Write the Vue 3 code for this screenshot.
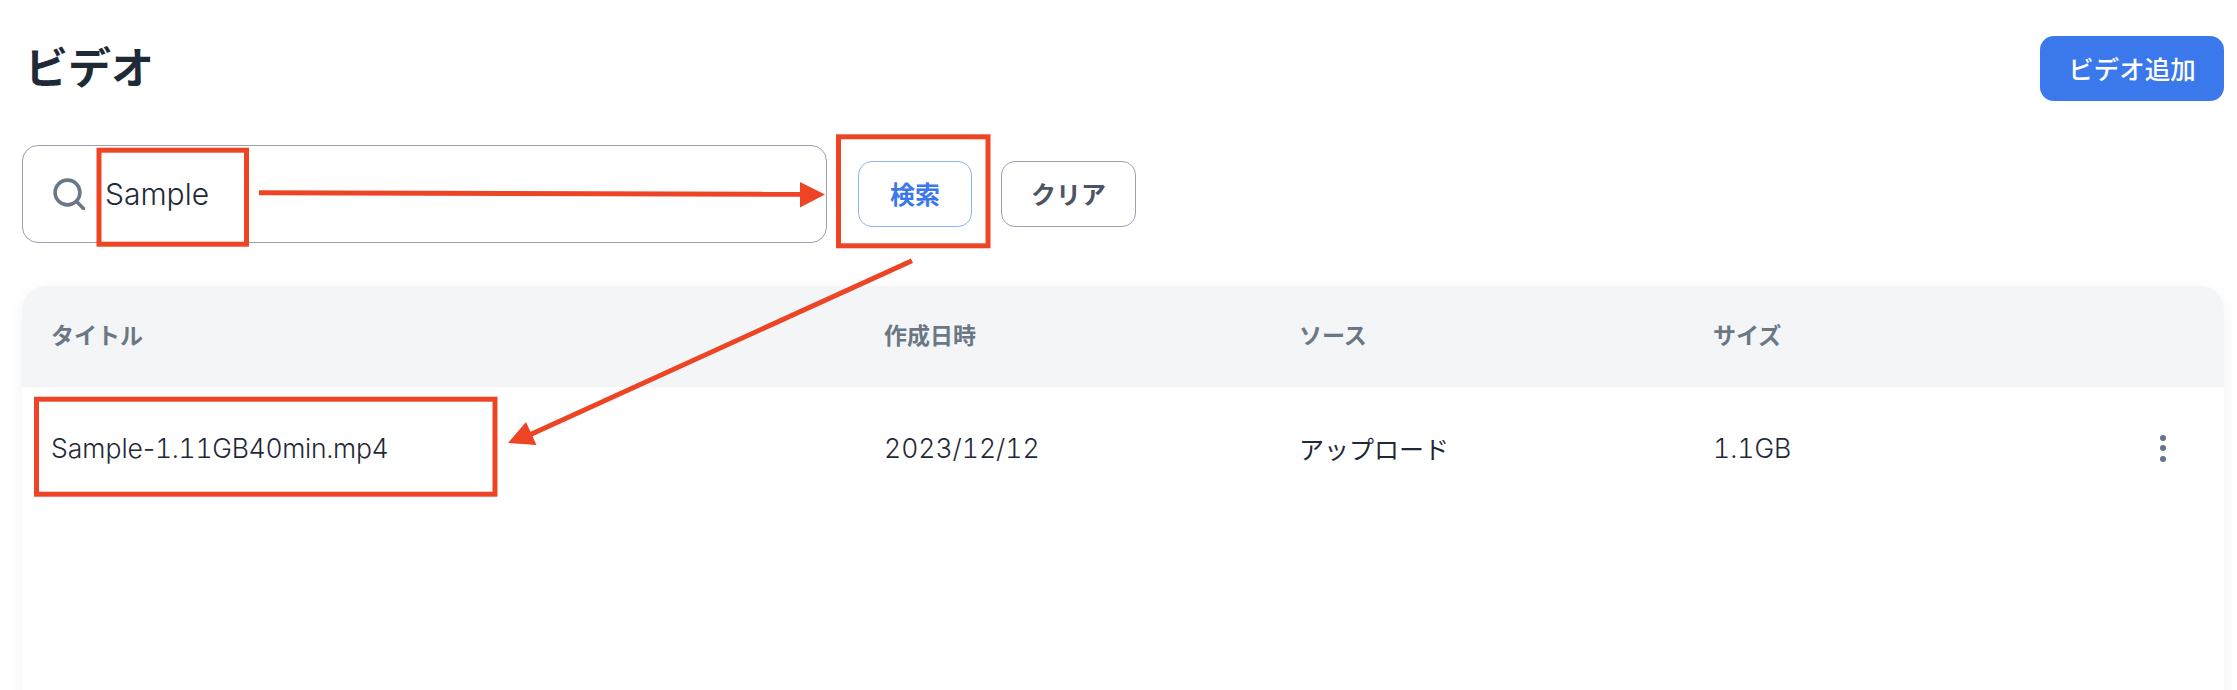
<template>
  <div class="page">
    <div class="head">
      <h1>ビデオ</h1>
      <button class="btn-add">ビデオ追加</button>
    </div>

    <div class="search-row">
      <label class="search-box">
        <svg class="search-icon" viewBox="0 0 32 32" fill="none" stroke="#687888" stroke-width="3.6" stroke-linecap="round">
          <circle cx="14.5" cy="14.5" r="12.4" />
          <path d="M24 24 L30.5 30.5" />
        </svg>
        <input type="text" value="Sample" />
      </label>
      <button class="btn-search">検索</button>
      <button class="btn-clear">クリア</button>
    </div>

    <div class="card">
      <div class="row row-head">
        <div v-for="c in columns" :key="c">{{ c }}</div>
        <div></div>
      </div>
      <div v-for="v in videos" :key="v.name + v.file" class="row row-body">
        <div class="title"><span class="name">{{ v.name }}</span>{{ v.file }}</div>
        <div>{{ v.created }}</div>
        <div class="jp">{{ v.source }}</div>
        <div>{{ v.size }}</div>
        <div class="more"><i></i><i></i><i></i></div>
      </div>
    </div>

    <!-- 赤い注釈 -->
    <svg class="notes" width="2237" height="690" viewBox="0 0 2237 690" fill="none">
      <g stroke="#ee4426" stroke-width="5">
        <rect x="99" y="150.2" width="147.5" height="94" />
        <rect x="838.5" y="136.8" width="149.5" height="109" />
        <rect x="36.5" y="399.2" width="458.5" height="95" />
        <path d="M259 192.7 L802 194.3" />
        <path d="M912 260.7 L525 437" />
      </g>
      <path d="M825 194.5 L800 182 L800 207.5 Z" fill="#ee4426" />
      <path d="M508 443 L526 422 L536.5 445 Z" fill="#ee4426" />
    </svg>
  </div>
</template>

<script setup>
const columns = ['タイトル', '作成日時', 'ソース', 'サイズ']
const videos = [
  { name: 'Sample-', file: '1.11GB40min.mp4', created: '2023/12/12', source: 'アップロード', size: '1.1GB' }
]
</script>

<style>
html, body { margin: 0; background: #fff; overflow: hidden; }
</style>

<style scoped>
.page {
  position: relative;
  width: 2237px;
  height: 690px;
  overflow: hidden;
  box-sizing: border-box;
  padding: 36px 13px 0 22px;
  font-family: Inter, "Noto Sans CJK JP", sans-serif;
  font-variant-numeric: tabular-nums;
  color: #1f2937;
}
.head { display: flex; justify-content: space-between; align-items: center; height: 65px; }
h1 { margin: 0 0 0 3px; font-size: 43px; font-weight: 700; color: #1f2a37; line-height: 1; }
button { font-family: inherit; font-size: 25px; font-weight: 600; background: #fff; cursor: pointer; box-sizing: border-box; padding: 0 0 2px; }
.btn-add { width: 184px; height: 65px; border: none; border-radius: 14px; background: #3b78ec; color: #fff; font-size: 25.5px; font-weight: 500; }
.search-row { display: flex; align-items: center; margin-top: 44px; }
.search-box {
  display: flex;
  align-items: center;
  box-sizing: border-box;
  width: 805px;
  height: 98px;
  padding-left: 30px;
  border: 1px solid #9aa0ad;
  border-radius: 16px;
}
.search-icon { width: 32px; height: 32px; flex: none; }
input {
  flex: 1;
  min-width: 0;
  margin-left: 20px;
  border: none;
  outline: none;
  padding: 0;
  font-family: inherit;
  font-size: 30px;
  font-weight: 300;
  color: #1f2937;
  background: transparent;
}
.btn-search { width: 114px; height: 66px; margin-left: 31px; border: 1px solid #8fb4f4; border-radius: 14px; color: #3b78ec; }
.btn-clear { width: 135px; height: 66px; margin-left: 29px; border: 1px solid #9aa0ad; border-radius: 14px; color: #4b5563; }
.card {
  margin-top: 43px;
  height: 520px;
  border-radius: 24px;
  background: #fff;
  overflow: hidden;
  box-shadow: 0 4px 16px rgba(0, 0, 0, 0.05);
}
.row {
  display: grid;
  grid-template-columns: 833px 415px 414px 1fr 122px;
  align-items: center;
  padding-left: 29px;
}
.row-head { height: 101px; padding-bottom: 5px; box-sizing: border-box; background: #f4f5f7; color: #6b7785; font-size: 23px; font-weight: 600; }
.row-body { height: 124px; padding-bottom: 2px; box-sizing: border-box; font-size: 26.5px; font-weight: 300; }
.title { letter-spacing: -0.3px; }
.name { font-variant-numeric: normal; letter-spacing: 0; }
.jp { font-size: 25px; font-weight: 400; }
.more { display: flex; flex-direction: column; align-items: center; gap: 4.5px; }
.more i { width: 6px; height: 6px; border-radius: 50%; background: #64748b; }
.notes { position: absolute; left: 0; top: 0; pointer-events: none; }
</style>
